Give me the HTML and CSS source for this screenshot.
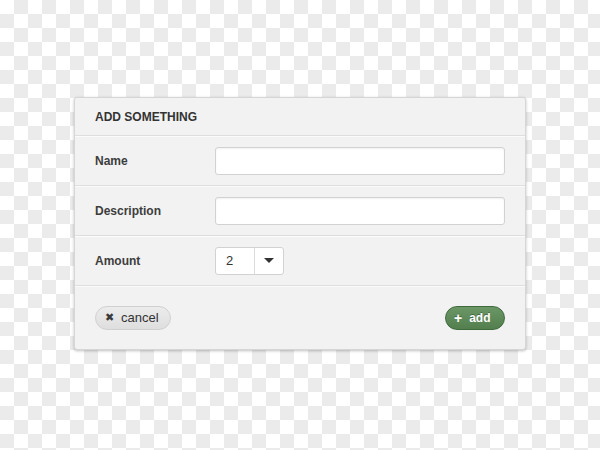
FILE: index.html
```html
<!DOCTYPE html>
<html lang="en">
<head>
    <meta charset="UTF-8">
    <meta name="viewport" content="width=device-width, initial-scale=1.0">
    <title>Add Something</title>
    <link rel="stylesheet" href="styles.css">
</head>
<body>

<div class="panel">
    <div class="panel-head">ADD SOMETHING</div>

    <div class="row">
        <label for="name">Name</label>
        <input type="text" id="name">
    </div>

    <div class="row">
        <label for="description">Description</label>
        <input type="text" id="description">
    </div>

    <div class="row">
        <label>Amount</label>
        <div class="select">
            <span class="select-value">2</span>
            <span class="select-arrow"></span>
        </div>
    </div>

    <div class="panel-foot">
        <button class="btn btn-cancel"><span class="icon">&#10006;</span>cancel</button>
        <button class="btn btn-add"><span class="icon">+</span>add</button>
    </div>
</div>

</body>
</html>
```

FILE: styles.css
```css
body {
    margin: 0;
    height: 450px;
    font-family: "Liberation Sans", Arial, sans-serif;
    color: #333;
    background: repeating-conic-gradient(#ebebeb 0 25%, #ffffff 0 50%) 0 0 / 28px 28px;
    overflow: hidden;
}
.panel {
    margin: 97px 0 0 74px;
    width: 450px;
    height: 251px;
    background-color: #f2f2f2;
    border: 1px solid #d6d6d6;
    border-radius: 3px;
    box-shadow: 0 1px 3px rgba(0, 0, 0, 0.25);
    display: flex;
    flex-direction: column;
}
.panel-head {
    height: 37px;
    padding: 0 20px;
    display: flex;
    align-items: center;
    font-size: 12px;
    font-weight: bold;
    color: #333;
    border-bottom: 1px solid #dedede;
    box-shadow: 0 1px 0 #fbfbfb;
}
.row {
    height: 49px;
    padding: 0 20px;
    display: flex;
    align-items: center;
    border-bottom: 1px solid #dedede;
    box-shadow: 0 1px 0 #fbfbfb;
}
.row label {
    width: 120px;
    font-size: 12px;
    font-weight: bold;
    color: #3d3d3d;
}
.row input {
    flex: 1;
    height: 28px;
    box-sizing: border-box;
    background-color: #fff;
    border: 1px solid #d2d2d2;
    border-radius: 3px;
    box-shadow: inset 0 1px 2px rgba(0, 0, 0, 0.06);
    outline: none;
}
.select {
    display: flex;
    height: 28px;
    box-sizing: border-box;
    background-color: #fff;
    border: 1px solid #d2d2d2;
    border-radius: 3px;
}
.select-value {
    width: 39px;
    padding-left: 10px;
    box-sizing: border-box;
    display: flex;
    align-items: center;
    font-size: 13px;
    border-right: 1px solid #dcdcdc;
}
.select-arrow {
    width: 28px;
    display: flex;
    align-items: center;
    justify-content: center;
}
.select-arrow::after {
    content: "";
    border-left: 5px solid transparent;
    border-right: 5px solid transparent;
    border-top: 5px solid #333;
}
.panel-foot {
    flex: 1;
    padding: 0 20px;
    display: flex;
    align-items: center;
    justify-content: space-between;
}
.btn {
    height: 24px;
    border-radius: 12px;
    font-family: inherit;
    font-size: 12px;
    font-weight: bold;
    display: flex;
    align-items: center;
    cursor: pointer;
}
.btn .icon {
    margin-right: 7px;
}
.btn-cancel {
    width: 76px;
    padding: 0 0 0 9px;
    background: linear-gradient(#ececec, #dedede);
    border: 1px solid #d0d0d0;
    color: #333;
    font-weight: normal;
    font-size: 13px;
}
.btn-cancel .icon {
    font-size: 11px;
    color: #3a3a3a;
}
.btn-add {
    width: 60px;
    padding: 0 0 0 8px;
    background: linear-gradient(#6b9766, #537f4f);
    border: 1px solid #3f6a3c;
    color: #fff;
    text-shadow: 0 -1px 0 rgba(0, 0, 0, 0.3);
}
.btn-add .icon {
    font-size: 14px;
}
```
